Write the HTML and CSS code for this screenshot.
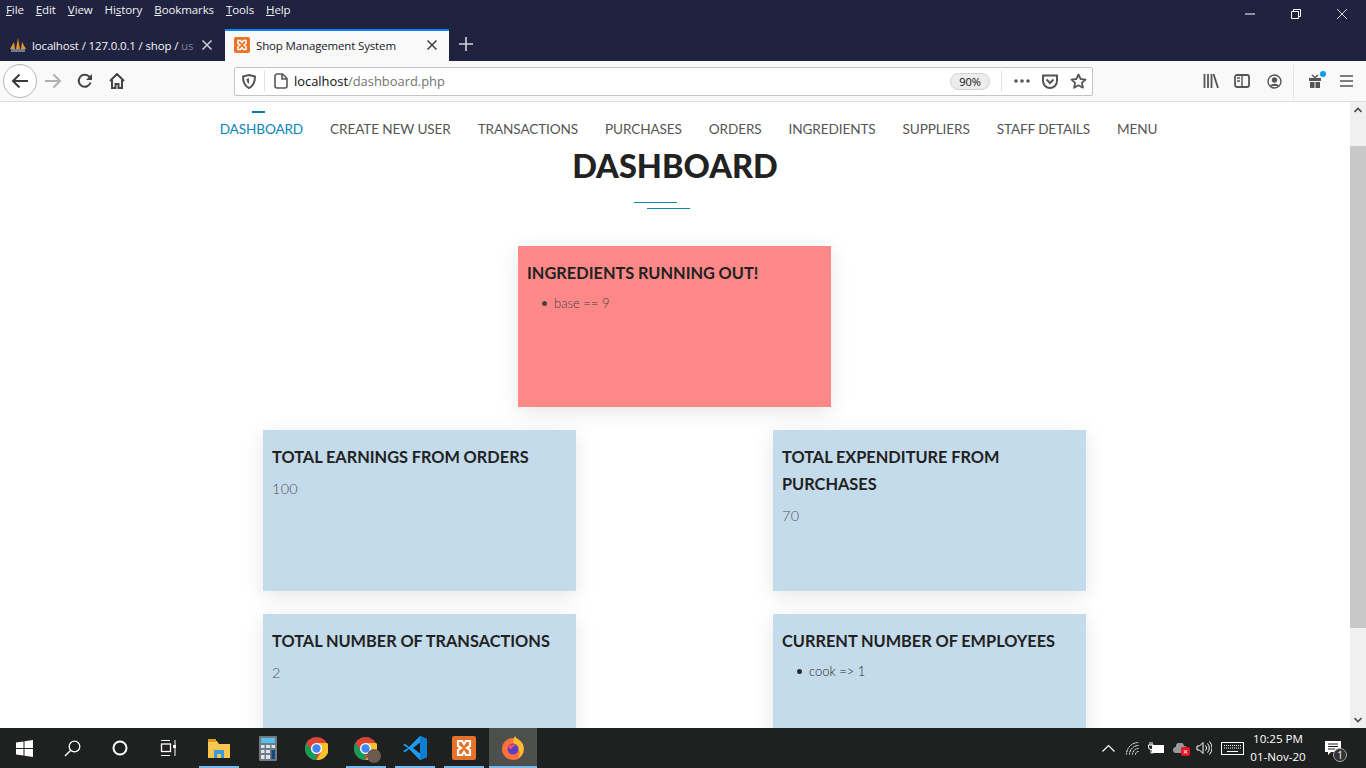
FILE: index.html
```html
<!DOCTYPE html>
<html lang="en">
<head>
<meta charset="UTF-8">
<meta name="viewport" content="width=device-width, initial-scale=1.0">
<title>Shop Management System</title>
<link rel="stylesheet" href="styles.css">
</head>
<body>
<div class="menubar">
    <span class="menu-items">
        <span><u>F</u>ile</span>
        <span><u>E</u>dit</span>
        <span><u>V</u>iew</span>
        <span>Hi<u>s</u>tory</span>
        <span><u>B</u>ookmarks</span>
        <span><u>T</u>ools</span>
        <span><u>H</u>elp</span>
    </span>
    <span class="window-buttons">
        <svg width="12" height="12" viewBox="0 0 12 12"><path d="M1 6h10" stroke="#fff"/></svg>
        <svg width="12" height="12" viewBox="0 0 12 12"><path d="M1.500 3.500h7v7h-7zM3.500 3.500v-2h7v7h-2" fill="none" stroke="#fff"/></svg>
        <svg width="12" height="12" viewBox="0 0 12 12"><path d="M1 1l10 10M11 1L1 11" stroke="#fff" stroke-width=".8"/></svg>
    </span>
</div>
<div class="tabbar">
    <div class="tab">
        <svg width="18" height="16" viewBox="0 0 18 16"><path d="M1 12L5 5l1 7zM7 12l2-11 2 11zM12 12l1-7 4 7z" fill="#e8932a"/><rect x="2" y="12" width="14" height="3" fill="#6d7a94"/></svg>
        <span class="tab-title">localhost / 127.0.0.1 / shop / <span class="tab-fade">us</span></span>
        <svg class="tab-close" width="12" height="12" viewBox="0 0 12 12"><path d="M1.500 1.500l9 9M10.500 1.500l-9 9" stroke="#c9cad3" stroke-width="1.600"/></svg>
    </div>
    <div class="tab tab-active">
        <svg width="16" height="16" viewBox="0 0 16 16"><rect width="16" height="16" rx="2" fill="#ea7327"/><path d="M4 3.500h2.500L8 5.500l1.500-2H12v3l-2 1.500 2 1.500v3H9.500L8 10.500l-1.500 2H4v-3L6 8 4 6.500z" fill="none" stroke="#fff" stroke-width="1.500"/></svg>
        <span class="tab-title">Shop Management System</span>
        <svg class="tab-close" width="12" height="12" viewBox="0 0 12 12"><path d="M1.500 1.500l9 9M10.500 1.500l-9 9" stroke="#45464f" stroke-width="1.600"/></svg>
    </div>
    <svg class="new-tab" width="14" height="14" viewBox="0 0 14 14"><path d="M7 0v14M0 7h14" stroke="#d4d5dc" stroke-width="1.600"/></svg>
</div>
<div class="toolbar">
    <div class="nav-buttons">
        <span class="back-circle">
            <svg width="18" height="16" viewBox="0 0 18 16"><path d="M17 8H2M8.500 1.500L2 8l6.500 6.500" fill="none" stroke="#38383d" stroke-width="2"/></svg>
        </span>
        <svg class="tool-forward" width="18" height="16" viewBox="0 0 18 16"><path d="M1 8h15M9.500 1.500L16 8l-6.500 6.500" fill="none" stroke="#b1b1b3" stroke-width="2"/></svg>
        <svg class="tool-reload" width="16" height="16" viewBox="0 0 16 16"><path d="M13.500 9.500A6 6 0 1 1 12 3.500l2 2" fill="none" stroke="#444" stroke-width="2"/><path d="M15 1v6H9z" fill="#444"/></svg>
        <svg class="tool-home" width="16" height="16" viewBox="0 0 16 16"><path d="M1 8l7-7 7 7M3 7v8h3.500v-4h3v4H13V7" fill="none" stroke="#444" stroke-width="2"/></svg>
    </div>
    <div class="urlbar">
        <svg class="url-shield" width="14" height="15" viewBox="0 0 14 15"><path d="M7 1l6 1.500c0 5-1.500 9.500-6 11.500C2.500 12 1 7.500 1 2.500z" fill="none" stroke="#555" stroke-width="2"/><path d="M7 4v6c-1.500-1-2.500-3-2.500-5z" fill="#555"/></svg>
        <span class="url-sep"></span>
        <svg class="url-page" width="14" height="16" viewBox="0 0 14 16"><path d="M2.500 1h6L13 5.500V13a2 2 0 0 1-2 2H3a2 2 0 0 1-2-2V2.500zM8 1v5h5" fill="none" stroke="#555" stroke-width="1.600"/></svg>
        <span class="url-text">localhost<span class="url-path">/dashboard.php</span></span>
        <span class="zoom-pill">90%</span>
        <span class="url-sep url-sep-right"></span>
        <svg class="url-more" width="16" height="4" viewBox="0 0 16 4"><circle cx="2" cy="2" r="1.800" fill="#555"/><circle cx="8" cy="2" r="1.800" fill="#555"/><circle cx="14" cy="2" r="1.800" fill="#555"/></svg>
        <svg class="url-pocket" width="16" height="15" viewBox="0 0 16 15"><path d="M1 1.500h14V7a7 7 0 0 1-14 0z" fill="none" stroke="#555" stroke-width="2"/><path d="M4.500 5.500L8 9l3.500-3.500" fill="none" stroke="#555" stroke-width="2"/></svg>
        <svg class="url-star" width="17" height="16" viewBox="0 0 17 16"><path d="M8.500 1.500l2.100 4.500 4.900.6-3.600 3.300 1 4.800-4.400-2.400-4.400 2.400 1-4.800-3.600-3.300 4.900-.6z" fill="none" stroke="#555" stroke-width="1.800" stroke-linejoin="round"/></svg>
    </div>
    <div class="tool-right">
        <svg width="16" height="14" viewBox="0 0 16 14"><path d="M1.500 0v14M5 0v14M8.500 0v14M10.500 0l4.500 14" stroke="#555" stroke-width="1.800"/></svg>
        <svg class="tool-sidebar" width="16" height="14" viewBox="0 0 16 14"><rect x="1" y="1" width="14" height="12" rx="2" fill="none" stroke="#555" stroke-width="1.800"/><path d="M8 1v12M3 4h3M3 7h3" stroke="#555" stroke-width="1.400"/></svg>
        <svg class="tool-profile" width="15" height="15" viewBox="0 0 15 15"><circle cx="7.500" cy="7.500" r="6.500" fill="none" stroke="#555" stroke-width="1.400"/><circle cx="7.500" cy="6" r="2.700" fill="#555"/><path d="M3 12c1-3 8-3 9 0z" fill="#555"/></svg>
        <span class="tool-sep"></span>
        <span class="gift">
            <svg width="14" height="14" viewBox="0 0 14 14"><path d="M1 4h12v3H1zM2 8h4.500v6H2zM7.500 8H12v6H7.500z" fill="#555"/><path d="M4 1l3 2.500L10 1" fill="none" stroke="#555" stroke-width="1.500"/></svg>
            <span class="gift-dot"></span>
        </span>
        <svg class="tool-menu" width="13" height="12" viewBox="0 0 13 12"><path d="M0 1h13M0 6h13M0 11h13" stroke="#555" stroke-width="1.600"/></svg>
    </div>
</div>

<div class="viewport">
    <main class="page">
        <nav class="nav">
            <a class="nav-link nav-current" href="#">DASHBOARD</a>
            <a class="nav-link" href="#">CREATE NEW USER</a>
            <a class="nav-link" href="#">TRANSACTIONS</a>
            <a class="nav-link" href="#">PURCHASES</a>
            <a class="nav-link" href="#">ORDERS</a>
            <a class="nav-link" href="#">INGREDIENTS</a>
            <a class="nav-link" href="#">SUPPLIERS</a>
            <a class="nav-link" href="#">STAFF DETAILS</a>
            <a class="nav-link" href="#">MENU</a>
        </nav>
        <h1 class="page-title">DASHBOARD</h1>
        <div class="title-rule">
            <span></span>
            <span class="title-rule-low"></span>
        </div>
        <div class="card-top">
            <section class="card card-alert">
                <h3>INGREDIENTS RUNNING OUT!</h3>
                <ul><li>base == 9</li></ul>
            </section>
        </div>
        <div class="card-row">
            <section class="card">
                <h3>TOTAL EARNINGS FROM ORDERS</h3>
                <p>100</p>
            </section>
            <section class="card">
                <h3>TOTAL EXPENDITURE FROM PURCHASES</h3>
                <p>70</p>
            </section>
        </div>
        <div class="card-row">
            <section class="card">
                <h3>TOTAL NUMBER OF TRANSACTIONS</h3>
                <p>2</p>
            </section>
            <section class="card">
                <h3>CURRENT NUMBER OF EMPLOYEES</h3>
                <ul class="list-dark"><li>cook =&gt; 1</li></ul>
            </section>
        </div>
    </main>
    <div class="scrollbar">
        <svg class="scroll-arrow" width="8" height="6" viewBox="0 0 8 6"><path d="M.5 5L4 1.500 7.500 5" fill="none" stroke="#505050" stroke-width="1.600"/></svg>
        <div class="scroll-track"><div class="scroll-thumb"></div></div>
        <svg class="scroll-arrow" width="8" height="6" viewBox="0 0 8 6"><path d="M.5 1L4 4.500 7.500 1" fill="none" stroke="#505050" stroke-width="1.600"/></svg>
    </div>
</div>

<footer class="taskbar">
    <div class="task-left">
        <span class="task-slot"><svg width="17" height="17" viewBox="0 0 17 17"><path d="M0 2.500l7.500-1v6.500H0zM8.500 1.300L17 0v8H8.500zM0 9h7.500v6.500l-7.500-1zM8.500 9H17v8l-8.500-1.300z" fill="#fff"/></svg></span>
        <span class="task-slot"><svg width="17" height="17" viewBox="0 0 17 17"><circle cx="10.500" cy="6.500" r="5.300" fill="none" stroke="#fff" stroke-width="1.300"/><path d="M6.500 10.500L1 16" stroke="#fff" stroke-width="1.500"/></svg></span>
        <span class="task-slot"><svg width="16" height="16" viewBox="0 0 16 16"><circle cx="8" cy="8" r="6.500" fill="none" stroke="#fff" stroke-width="2"/></svg></span>
        <span class="task-slot"><svg width="17" height="16" viewBox="0 0 17 16"><path d="M1 .5h9M1 15.500h9M15 0v16" stroke="#fff"/><rect x="1.500" y="4" width="9" height="7.500" fill="none" stroke="#fff" stroke-width="1.300"/><rect x="13" y="5" width="3" height="3" fill="#fff"/></svg></span>
        <span class="task-app task-open task-open-double"><svg width="22" height="20" viewBox="0 0 22 20"><path d="M0 3h9l2 3H22v14H0z" fill="#f6c64e"/><path d="M0 1h8v3H0z" fill="#d99a23"/><path d="M6 12h10v8h-3v-4H9v4H6z" fill="#3a9bdc"/></svg></span>
        <span class="task-app"><svg width="18" height="25" viewBox="0 0 18 25"><rect width="18" height="25" rx="1" fill="#6f7c87"/><rect x="2" y="2" width="14" height="5" fill="#54c3e8"/><path d="M2 9h3.500v3H2zM7 9h4v3H7zM2 14h3.500v3H2zM7 14h4v3H7zM2 19h3.500v4H2zM7 19h4v4H7z" fill="#dfe4e8"/><rect x="12.500" y="9" width="3.500" height="3" fill="#dfe4e8"/><rect x="12.500" y="14" width="3.500" height="9" fill="#17467c"/></svg></span>
        <span class="task-app"><svg width="23" height="23" viewBox="0 0 23 23"><circle cx="11.500" cy="11.500" r="11.500" fill="#db4437"/><path d="M11.500 23A11.500 11.500 0 0 1 1.500 5.800L7 14.500l4.500 3z" fill="#0f9d58"/><path d="M11.500 6H22.300A11.500 11.500 0 0 1 11.500 23L16 15z" fill="#fbc02d"/><circle cx="11.500" cy="11.500" r="5.500" fill="#fff"/><circle cx="11.500" cy="11.500" r="4.200" fill="#4285f4"/></svg></span>
        <span class="task-app task-open"><span class="chrome-profile"><svg width="23" height="23" viewBox="0 0 23 23"><circle cx="11.500" cy="11.500" r="11.500" fill="#db4437"/><path d="M11.500 23A11.500 11.500 0 0 1 1.500 5.800L7 14.500l4.500 3z" fill="#0f9d58"/><path d="M11.500 6H22.300A11.500 11.500 0 0 1 11.500 23L16 15z" fill="#fbc02d"/><circle cx="11.500" cy="11.500" r="5.500" fill="#fff"/><circle cx="11.500" cy="11.500" r="4.200" fill="#4285f4"/></svg><span class="chrome-avatar"></span></span></span>
        <span class="task-app task-open"><svg width="24" height="24" viewBox="0 0 24 24"><path d="M17 0l7 3v18l-7 3L6 13l-4 3.300L0 15l5-3-5-3 2-1.300L6 11z" fill="#1f9cf0"/><path d="M17 6.500v11L10 12z" fill="#1b1d1c"/><path d="M17 0l7 3v18l-7 3z" fill="#0e7fd0"/></svg></span>
        <span class="task-app task-open"><svg width="24" height="24" viewBox="0 0 24 24"><rect width="24" height="24" rx="2" fill="#e6722a"/><path d="M6 5h4l2 3 2-3h4v5l-3 2 3 2v5h-4l-2-3-2 3H6v-5l3-2-3-2z" fill="none" stroke="#fff" stroke-width="2.200"/></svg></span>
        <span class="task-app task-open task-active"><svg width="24" height="24" viewBox="0 0 24 24"><circle cx="12" cy="13" r="11" fill="#ff7139"/><path d="M14 0c1 3 6 4 8 9 2 6-1 12-6 14 4-4 3-9 0-11-1-3-3-4-4-6 0-2 1-4 2-6z" fill="#ffbd2e"/><circle cx="12" cy="13" r="5.500" fill="#5b3fc9"/><path d="M7 11c2-3 6-3 8-1-3 0-4 1-4 3-2 0-3-1-4-2z" fill="#ff4f5e"/></svg></span>
    </div>
    <div class="tray">
        <svg class="tray-chevron" width="13" height="8" viewBox="0 0 13 8"><path d="M.5 7.500l6-6 6 6" fill="none" stroke="#fff" stroke-width="1.200"/></svg>
        <svg class="tray-wifi" width="13" height="13" viewBox="0 0 13 13"><path d="M.5 12.500a12 12 0 0 1 12-12M3.500 12.500a9 9 0 0 1 9-9M6.500 12.500a6 6 0 0 1 6-6M9.500 12.500a3 3 0 0 1 3-3" fill="none" stroke="#fff" stroke-dasharray="2 .6"/></svg>
        <svg class="tray-battery" width="16" height="12" viewBox="0 0 16 12"><rect x="4.500" y="3.500" width="11" height="7" fill="#fff" stroke="#fff"/><path d="M2 0v3M4 0v3M.5 3h5v2a2 2 0 0 1-5 0zM3 7v4h2" fill="none" stroke="#fff"/></svg>
        <span class="tray-cloud">
            <svg width="14" height="10" viewBox="0 0 14 10"><path d="M3 10a3 3 0 0 1 0-6 4 4 0 0 1 8-1 3.500 3.500 0 0 1 0 7z" fill="#9a9a9a"/></svg>
            <span class="tray-error">×</span>
        </span>
        <svg class="tray-volume" width="16" height="14" viewBox="0 0 16 14"><path d="M1 5h2.500L7 1.500v11L3.500 9H1zM9.500 4.500a3.500 3.500 0 0 1 0 5M11.500 2.500a6.500 6.500 0 0 1 0 9M13.500.5a9.500 9.500 0 0 1 0 13" fill="none" stroke="#fff"/></svg>
        <svg class="tray-keyboard" width="23" height="13" viewBox="0 0 23 13"><rect x=".5" y=".5" width="22" height="12" fill="none" stroke="#fff"/><path d="M3 3.500h17M3 6h17" stroke="#fff" stroke-dasharray="1 1"/><path d="M6 9.500h11" stroke="#fff"/></svg>
        <div class="clock">
            <span>10:25 PM</span>
            <span>01-Nov-20</span>
        </div>
        <span class="notify">
            <svg width="16" height="14" viewBox="0 0 16 14"><path d="M0 0h16v11H6l-3 3v-3H0z" fill="#fff"/><path d="M3 3h10M3 5.500h10M3 8h7" stroke="#1f2120"/></svg>
            <span class="notify-count">1</span>
        </span>
    </div>
</footer>
</body>
</html>
```

FILE: styles.css
```css
* {
    box-sizing: border-box;
}
html, body {
    height: 100%;
}
body {
    margin: 0;
    width: 1366px;
    height: 768px;
    display: flex;
    flex-direction: column;
    overflow: hidden;
    font-family: "Lato", sans-serif;
    background-color: #fff;
}

/* browser chrome */
.menubar {
    height: 29px;
    flex: none;
    display: flex;
    justify-content: space-between;
    background-color: #202340;
    color: #f2f2f5;
    font-family: "Open Sans", sans-serif;
    font-size: 11.500px;
    letter-spacing: -.1px;
}
.menu-items {
    display: flex;
    gap: 12px;
    padding: 1px 0 0 6px;
    line-height: 17px;
}
.window-buttons {
    display: flex;
    gap: 34px;
    padding: 8px 18px 0 0;
}
.tabbar {
    height: 32px;
    flex: none;
    display: flex;
    align-items: stretch;
    background-color: #202340;
    color: #f4f4f6;
    font-family: "Open Sans", sans-serif;
    font-size: 11.500px;
    letter-spacing: -.15px;
}
.tab {
    width: 225px;
    display: flex;
    align-items: center;
    gap: 5px;
    padding: 0 12px 0 9px;
    white-space: nowrap;
}
.tab-title {
    flex: 1;
}
.tab-fade {
    color: #7d7f92;
}
.tab-active {
    width: 224px;
    gap: 6px;
    padding: 0 11px 2px 9px;
    background-color: #f9f9fa;
    border-top: 2px solid #0a84ff;
    color: #18181a;
}
.new-tab {
    margin: 8px 0 0 10px;
}
.toolbar {
    height: 41px;
    flex: none;
    display: flex;
    align-items: center;
    background-color: #f9f9fa;
    border-bottom: 1px solid #dedede;
}
.nav-buttons {
    width: 234px;
    display: flex;
    align-items: center;
    padding-left: 3px;
}
.back-circle {
    width: 34px;
    height: 34px;
    display: flex;
    align-items: center;
    justify-content: center;
    border: 1px solid #b5b5b5;
    border-radius: 50%;
    background-color: #fff;
}
.tool-forward {
    margin-left: 7px;
}
.tool-reload {
    margin-left: 15px;
}
.tool-home {
    margin-left: 16px;
}
.urlbar {
    width: 859px;
    height: 29px;
    display: flex;
    align-items: center;
    background-color: #fff;
    border: 1px solid #c4c4c4;
    border-radius: 2px;
    font-size: 12.900px;
    font-family: "Open Sans", sans-serif;
    color: #0c0c0d;
}
.url-shield {
    margin-left: 7px;
}
.url-sep {
    width: 1px;
    height: 22px;
    margin-left: 8px;
    background-color: #e3e3e3;
}
.url-page {
    margin-left: 9px;
}
.url-text {
    flex: 1;
    margin-left: 6px;
}
.url-path {
    color: #737373;
}
.zoom-pill {
    width: 40px;
    height: 17px;
    margin-right: 11px;
    text-align: center;
    line-height: 16px;
    font-size: 11px;
    background-color: #ededf0;
    border: 1px solid #d0d0d2;
    border-radius: 9px;
}
.url-sep-right {
    margin-left: 0;
}
.url-more {
    margin-left: 12px;
}
.url-pocket {
    margin-left: 12px;
}
.url-star {
    margin: 0 5px 0 12px;
}
.tool-right {
    flex: 1;
    display: flex;
    align-items: center;
    padding-left: 110px;
    gap: 16px;
}
.tool-sidebar {
    margin-left: -1px;
}
.tool-profile {
    margin-left: 1px;
}
.tool-sep {
    width: 1px;
    height: 33px;
    margin-left: -5px;
    background-color: #e3e3e3;
}
.gift {
    position: relative;
    display: flex;
    margin: 0 0 0 -2px;
}
.gift-dot {
    position: absolute;
    top: -3px;
    right: -4px;
    width: 6px;
    height: 6px;
    border-radius: 50%;
    background-color: #0a9dff;
}
.tool-menu {
    margin-left: 2px;
}

/* page */
.viewport {
    flex: 1;
    display: flex;
    min-height: 0;
    overflow: hidden;
}
.page {
    flex: 1;
    min-width: 0;
    overflow: hidden;
    color: #222;
}
.nav {
    display: flex;
    justify-content: center;
    gap: 27px;
    height: 44px;
    padding: 18px 0 0 27px;
}
.nav-link {
    position: relative;
    font-size: 13.600px;
    line-height: 18px;
    color: #555;
    text-decoration: none;
    letter-spacing: -.12px;
}
.nav-current {
    color: #0a84b5;
}
.nav-current::before {
    content: "";
    position: absolute;
    top: -9px;
    left: 32px;
    width: 13px;
    height: 2px;
    background-color: #0a7aa8;
}
.page-title {
    margin: 0;
    height: 47px;
    text-align: center;
    font-size: 32.500px;
    line-height: 40px;
    font-weight: 900;
    color: #222;
}
.title-rule {
    width: 56px;
    height: 8px;
    margin: 9px 0 0 634px;
    display: flex;
    flex-direction: column;
    gap: 5px;
}
.title-rule span {
    display: block;
    width: 43px;
    height: 1px;
    background-color: #0a84b5;
}
.title-rule .title-rule-low {
    align-self: flex-end;
}
.card-top {
    display: flex;
    justify-content: center;
    margin: 36px 0 23px;
    padding-right: 1px;
}
.card-row {
    width: 823px;
    margin: 0 0 23px 263px;
    display: flex;
    justify-content: space-between;
}
.card {
    width: 313px;
    height: 161px;
    padding: 13px 9px;
    background-color: #c4dbeb;
    box-shadow: 0 5px 20px rgba(0, 0, 0, .1);
}
.card-alert {
    background-color: #fd8888;
}
.card h3 {
    margin: 0;
    font-size: 16.350px;
    line-height: 27px;
    font-weight: 700;
    word-spacing: -.3px;
    color: #222;
}
.card p {
    margin: 9px 0 0;
    font-size: 14.400px;
    line-height: 20px;
    font-weight: 300;
    letter-spacing: .3px;
    color: #555;
}
.card ul {
    margin: 7px 0 0;
    padding: 0 0 0 27px;
    list-style: none;
    font-size: 13px;
    line-height: 20px;
    font-weight: 300;
    color: #444;
}
.card li {
    position: relative;
}
.card li::before {
    content: "";
    position: absolute;
    left: -12px;
    top: 8px;
    width: 5px;
    height: 5px;
    border-radius: 50%;
    background-color: currentColor;
}
.card .list-dark {
    color: #2a2a2a;
}
.scrollbar {
    width: 16px;
    flex: none;
    display: flex;
    flex-direction: column;
    align-items: center;
    background-color: #f0f0f0;
}
.scroll-arrow {
    flex: none;
    margin: 5px 0;
}
.scroll-track {
    flex: 1;
    width: 100%;
    padding-top: 28px;
}
.scroll-thumb {
    width: 100%;
    height: 482px;
    background-color: #c8c8c8;
}

/* taskbar */
.taskbar {
    height: 40px;
    flex: none;
    display: flex;
    justify-content: space-between;
    background-color: #1e2120;
}
.task-left {
    display: flex;
    align-items: stretch;
}
.task-slot {
    width: 48px;
    display: flex;
    align-items: center;
    justify-content: center;
}
.task-app {
    position: relative;
    width: 49px;
    display: flex;
    align-items: center;
    justify-content: center;
}
.task-slot + .task-app {
    margin-left: 2px;
}
.task-open::after {
    content: "";
    position: absolute;
    left: 5px;
    right: 4px;
    bottom: 0;
    height: 2px;
    background-color: #76b9ed;
}
.task-active {
    background-color: #4c4f4c;
    width: 48px;
    margin-left: 1px;
}
.task-active::after {
    left: 0;
    right: 0;
}
.chrome-profile {
    position: relative;
    display: flex;
}
.chrome-avatar {
    position: absolute;
    right: -4px;
    bottom: -3px;
    width: 14px;
    height: 14px;
    border-radius: 50%;
    background-color: #6a5a50;
}
.tray {
    display: flex;
    align-items: center;
    color: #fff;
    font-family: "Open Sans", sans-serif;
    font-size: 11.600px;
}
.tray-chevron {
    margin-right: 11px;
}
.tray-battery {
    margin-left: 9px;
}
.tray-cloud {
    position: relative;
    display: flex;
    margin-left: 9px;
}
.tray-error {
    position: absolute;
    right: -3px;
    bottom: -3px;
    width: 9px;
    height: 9px;
    border-radius: 2px;
    text-align: center;
    font-size: 9px;
    line-height: 9px;
    background-color: #e81123;
}
.tray-volume {
    margin-left: 9px;
}
.tray-keyboard {
    margin-left: 9px;
}
.clock {
    width: 70px;
    margin-left: -1px;
    padding-bottom: 2px;
    display: flex;
    flex-direction: column;
    align-items: center;
    gap: 1px;
    line-height: 17px;
}
.notify {
    position: relative;
    display: flex;
    margin: 0 25px 0 12px;
}
.notify-count {
    position: absolute;
    right: -6px;
    bottom: -7px;
    width: 14px;
    height: 14px;
    border: 1px solid #aaa;
    border-radius: 50%;
    text-align: center;
    font-size: 10px;
    line-height: 12px;
    background-color: #333;
}
```
